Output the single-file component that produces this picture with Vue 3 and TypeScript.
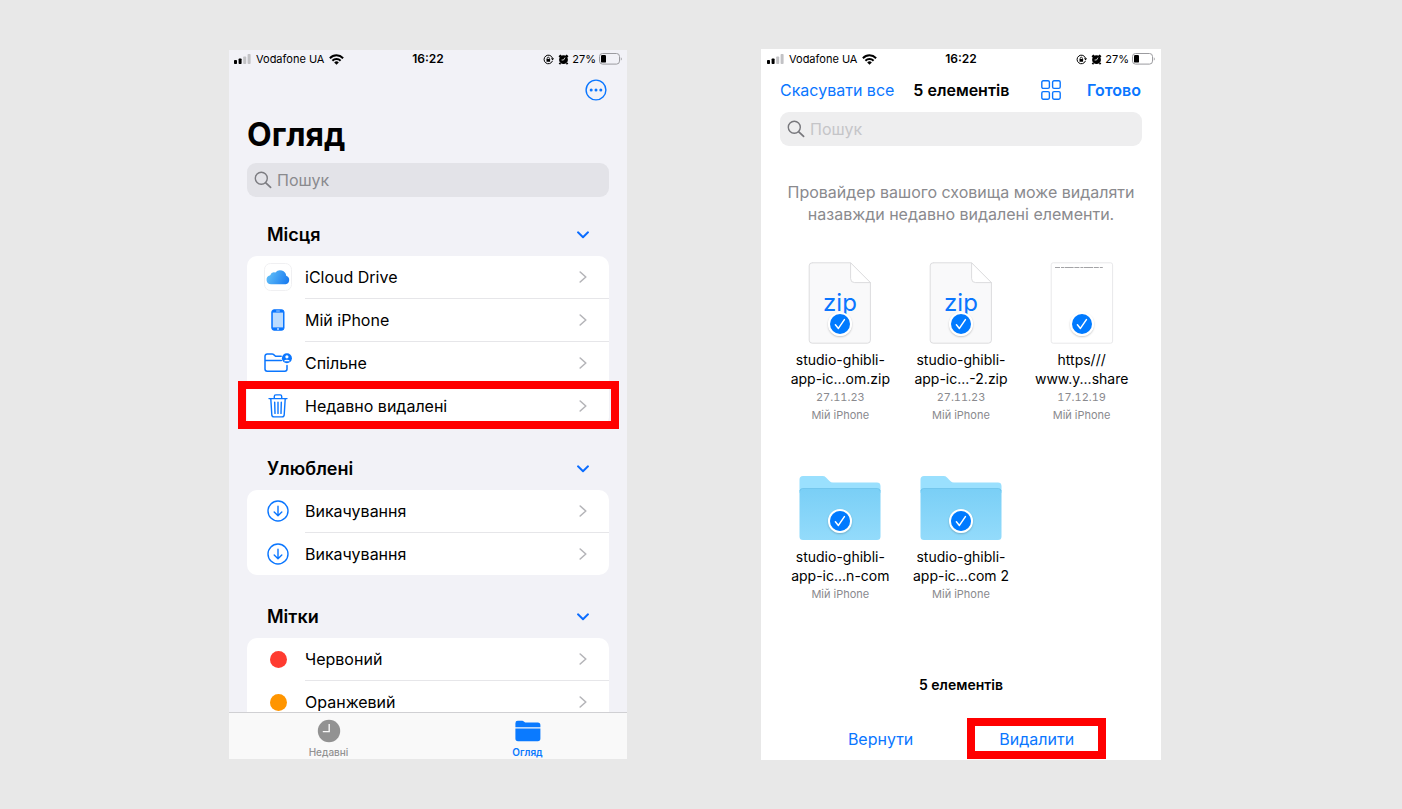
<script setup lang="ts">
import { ref } from 'vue'

type PhoneId = 'browse' | 'deleted'
interface Row {
  icon: string
  label: string
  highlighted?: boolean
}
interface Section {
  title: string
  rows: Row[]
}
interface FileItem {
  kind: 'zip' | 'page' | 'folder'
  lines: [string, string]
  date?: string
  place: string
  selected: boolean
}

const phones: PhoneId[] = ['browse', 'deleted']

const sections: Section[] = [
  {
    title: 'Місця',
    rows: [
      { icon: 'cloud', label: 'iCloud Drive' },
      { icon: 'phone', label: 'Мій iPhone' },
      { icon: 'shared', label: 'Спільне' },
      { icon: 'trash', label: 'Недавно видалені', highlighted: true },
    ],
  },
  {
    title: 'Улюблені',
    rows: [
      { icon: 'download', label: 'Викачування' },
      { icon: 'download', label: 'Викачування' },
    ],
  },
  {
    title: 'Мітки',
    rows: [
      { icon: 'red', label: 'Червоний' },
      { icon: 'orange', label: 'Оранжевий' },
    ],
  },
]

const files = ref<FileItem[]>([
  { kind: 'zip', lines: ['studio-ghibli-', 'app-ic...om.zip'], date: '27.11.23', place: 'Мій iPhone', selected: true },
  { kind: 'zip', lines: ['studio-ghibli-', 'app-ic...-2.zip'], date: '27.11.23', place: 'Мій iPhone', selected: true },
  { kind: 'page', lines: ['https///', 'www.y...share'], date: '17.12.19', place: 'Мій iPhone', selected: true },
  { kind: 'folder', lines: ['studio-ghibli-', 'app-ic...n-com'], place: 'Мій iPhone', selected: true },
  { kind: 'folder', lines: ['studio-ghibli-', 'app-ic...com 2'], place: 'Мій iPhone', selected: true },
])
</script>

<template>
  <main class="page">
    <section v-for="phone in phones" :key="phone" class="phone" :class="phone">
      <div class="status">
        <div class="status-left">
          <svg width="17" height="10" viewBox="0 0 17 10" aria-hidden="true">
            <rect x="0" y="6" width="3" height="4" rx="0.8" />
            <rect x="4.6" y="4.4" width="3" height="5.6" rx="0.8" />
            <rect x="9.2" y="2.4" width="3" height="7.6" rx="0.8" fill="#c2c2c5" />
            <rect x="13.6" y="0" width="3" height="10" rx="0.8" fill="#c2c2c5" />
          </svg>
          <span>Vodafone UA</span>
          <svg width="15" height="11" viewBox="0 0 15 11" fill="none" stroke="#000" stroke-width="2" aria-hidden="true">
            <path d="M0.9 4.2C4.6 0.4 10.4 0.4 14.1 4.2" />
            <path d="M3.4 6.7C5.7 4.4 9.3 4.4 11.6 6.7" />
            <path d="M5.2 8.4a3.2 3.2 0 0 1 4.6 0L7.5 10.8z" fill="#000" stroke="none" />
          </svg>
        </div>
        <strong class="clock">16:22</strong>
        <div class="status-right">
          <svg class="lock" width="11" height="11" viewBox="0 0 11 11" fill="none" stroke="#000" aria-hidden="true">
            <path d="M9.4 7A4.3 4.3 0 1 1 9.5 4.2" stroke-width="1" />
            <path d="M8 4.3h3L9.6 6.4z" fill="#000" stroke="none" />
            <rect x="3.5" y="5" width="3.6" height="2.8" rx="0.4" fill="#000" stroke="none" />
            <path d="M4.2 5V4.3a1.1 1.1 0 0 1 2.2 0V5" stroke-width="0.8" />
          </svg>
          <svg width="11" height="11" viewBox="0 0 11 11" aria-hidden="true">
            <circle cx="5.5" cy="5.7" r="4.4" />
            <path d="M1.2 3L3 1.2M9.8 3L8 1.2M2.4 9L1.4 10.2M8.6 9L9.6 10.2" stroke="#000" stroke-width="1.9" />
            <path d="M7 3.6L5.5 6H3.6" fill="none" stroke="#fff" stroke-width="0.8" />
          </svg>
          <span>27%</span>
          <svg width="23" height="12" viewBox="0 0 23 12" fill="none" aria-hidden="true">
            <rect x="0.5" y="0.5" width="20" height="10.6" rx="3" stroke="#9b9b9f" />
            <rect x="2" y="2" width="5" height="7.6" rx="1.2" fill="#000" />
            <path d="M21.8 4.2a2 2 0 0 1 0 3.4z" fill="#9b9b9f" />
          </svg>
        </div>
      </div>

      <template v-if="phone === 'browse'">
        <div class="scroll">
          <div class="toolbar">
            <button type="button" class="plain" aria-label="Ще">
              <svg width="22" height="22" viewBox="0 0 22 22" fill="none" aria-hidden="true">
                <circle cx="11" cy="11" r="9.9" stroke="#0a76ff" stroke-width="1.4" />
                <g fill="#0a76ff">
                  <circle cx="6.2" cy="11" r="1.5" />
                  <circle cx="11" cy="11" r="1.5" />
                  <circle cx="15.8" cy="11" r="1.5" />
                </g>
              </svg>
            </button>
          </div>
          <h1>Огляд</h1>
          <label class="search">
            <svg width="18" height="18" viewBox="0 0 18 18" fill="none" stroke="#7c7c81" stroke-width="1.4" stroke-linecap="round" aria-hidden="true">
              <circle cx="7.3" cy="7.3" r="6" />
              <path d="M11.8 11.8L16.6 16.4" stroke-width="1.7" />
            </svg>
            <input type="search" placeholder="Пошук" aria-label="Пошук" />
          </label>

          <div v-for="section in sections" :key="section.title" class="group">
            <div class="group-head">
              <h2>{{ section.title }}</h2>
              <button type="button" class="plain" :aria-label="section.title">
                <svg width="12" height="8" viewBox="0 0 12 8" fill="none" stroke="#0a6cff" stroke-width="1.9" stroke-linecap="round" stroke-linejoin="round" aria-hidden="true">
                  <path d="M1 1.3L6 6.2L11 1.3" />
                </svg>
              </button>
            </div>
            <ul class="card">
              <li v-for="(row, i) in section.rows" :key="i">
                <button type="button" class="row">
                  <span class="row-icon">
                    <svg v-if="row.icon === 'cloud'" width="28" height="28" viewBox="0 0 28 28" aria-hidden="true">
                      <defs>
                        <linearGradient id="cloud-fill" x1="0" y1="0.3" x2="1" y2="0.6">
                          <stop offset="0" stop-color="#62c0f8" />
                          <stop offset="1" stop-color="#1c7df0" />
                        </linearGradient>
                      </defs>
                      <rect x="0.5" y="0.5" width="27" height="27" rx="6" fill="#fff" stroke="#f0f0f2" />
                      <path d="M7.2 21.3a4.6 4.6 0 0 1-1-9.1 4.2 4.2 0 0 1 5.2-2.6 6.1 6.1 0 0 1 10.8 3.2 4.4 4.4 0 0 1-.6 8.5z" fill="url(#cloud-fill)" />
                    </svg>
                    <svg v-else-if="row.icon === 'phone'" width="14" height="22" viewBox="0 0 14 22" aria-hidden="true">
                      <rect x="0.8" y="0.8" width="12.2" height="20.4" rx="2.2" fill="#0a76ff" stroke="#0a76ff" />
                      <rect x="1.8" y="3.6" width="10.2" height="14.8" fill="#bcdcff" />
                      <path d="M5.2 2h3.6" stroke="#bcdcff" stroke-width="0.9" />
                      <circle cx="7" cy="19.9" r="1" fill="#bcdcff" />
                    </svg>
                    <svg v-else-if="row.icon === 'shared'" width="28" height="20" viewBox="0 0 28 20" fill="none" stroke="#0a76ff" stroke-width="1.5" stroke-linecap="round" aria-hidden="true">
                      <path d="M17.2 3.3H11.6L9.4 1.4A2 2 0 0 0 8.2 1H3.2A2.2 2.2 0 0 0 1 3.2V16a2.2 2.2 0 0 0 2.2 2.2H20.8A2.2 2.2 0 0 0 23 16V12.4M1 7.4H17.4" />
                      <circle cx="22.9" cy="5.2" r="5" fill="#0a76ff" stroke="none" />
                      <circle cx="22.9" cy="3.8" r="1.6" fill="#fff" stroke="none" />
                      <path d="M19.8 8.2a3.3 2.2 0 0 1 6.2 0z" fill="#fff" stroke="none" />
                    </svg>
                    <svg v-else-if="row.icon === 'trash'" width="20" height="24" viewBox="0 0 20 24" fill="none" stroke="#0a76ff" stroke-width="1.4" stroke-linecap="round" stroke-linejoin="round" aria-hidden="true">
                      <path d="M1 4.6H19M6.3 4.4V2.4A1.5 1.5 0 0 1 7.8 0.9H12.2A1.5 1.5 0 0 1 13.7 2.4V4.4" />
                      <path d="M2.8 4.8L3.8 20.8A2.1 2.1 0 0 0 5.9 22.9H14.1A2.1 2.1 0 0 0 16.2 20.8L17.2 4.8M6.7 8.2L7 19.4M10 8.2V19.4M13.3 8.2L13 19.4" />
                    </svg>
                    <svg v-else-if="row.icon === 'download'" width="22" height="22" viewBox="0 0 22 22" fill="none" stroke="#0a76ff" stroke-width="1.4" stroke-linecap="round" stroke-linejoin="round" aria-hidden="true">
                      <circle cx="11" cy="11" r="10" />
                      <path d="M11 6.2V15.6M7.2 12L11 15.7L14.8 12" />
                    </svg>
                    <i v-else class="dot" :class="row.icon"></i>
                  </span>
                  <span class="row-body">
                    <span>{{ row.label }}</span>
                    <svg width="8" height="12" viewBox="0 0 8 12" fill="none" stroke="#b5b5b9" stroke-width="1.6" stroke-linecap="round" stroke-linejoin="round" aria-hidden="true">
                      <path d="M1.2 1L6.8 6L1.2 11" />
                    </svg>
                  </span>
                </button>
                <span v-if="row.highlighted" class="marker"></span>
              </li>
            </ul>
          </div>
        </div>

        <nav class="tabs">
          <button type="button" class="tab">
            <svg width="24" height="24" viewBox="0 0 24 24" aria-hidden="true">
              <circle cx="12" cy="12" r="11.2" fill="#929292" />
              <path d="M12.2 5V12.6H5.8" fill="none" stroke="#f9f9f9" stroke-width="1.4" />
            </svg>
            <span>Недавні</span>
          </button>
          <button type="button" class="tab active">
            <svg width="26" height="24" viewBox="0 0 26 24" fill="#0a7aff" aria-hidden="true">
              <path d="M0.4 8.2V4.2A2.4 2.4 0 0 1 2.8 1.8H7.2A2.4 2.4 0 0 1 8.8 2.4L10.2 3.6H22.8A2.6 2.6 0 0 1 25.4 6.2V8.2z" />
              <path d="M0.4 9.6H25.4V19.6A2.6 2.6 0 0 1 22.8 22.2H3A2.6 2.6 0 0 1 0.4 19.6z" />
            </svg>
            <span>Огляд</span>
          </button>
        </nav>
      </template>

      <template v-else>
        <header class="nav">
          <button type="button" class="plain link">Скасувати все</button>
          <strong>5 елементів</strong>
          <button type="button" class="plain grid-button" aria-label="Вигляд">
            <svg width="20" height="20" viewBox="0 0 20 20" fill="none" stroke="#0a76ff" stroke-width="1.4" aria-hidden="true">
              <rect x="0.8" y="0.8" width="7.6" height="7.6" rx="1.4" />
              <rect x="11.6" y="0.8" width="7.6" height="7.6" rx="1.4" />
              <rect x="0.8" y="11.6" width="7.6" height="7.6" rx="1.4" />
              <rect x="11.6" y="11.6" width="7.6" height="7.6" rx="1.4" />
            </svg>
          </button>
          <button type="button" class="plain link done">Готово</button>
        </header>
        <label class="search">
          <svg width="18" height="18" viewBox="0 0 18 18" fill="none" stroke="#77777c" stroke-width="1.4" stroke-linecap="round" aria-hidden="true">
            <circle cx="7.3" cy="7.3" r="6" />
            <path d="M11.8 11.8L16.6 16.4" stroke-width="1.7" />
          </svg>
          <input type="search" placeholder="Пошук" aria-label="Пошук" />
        </label>
        <p class="notice">Провайдер вашого сховища може видаляти<br />назавжди недавно видалені елементи.</p>

        <ul class="files">
          <li v-for="(file, i) in files" :key="i">
            <label class="file">
              <span class="preview">
                <svg v-if="file.kind === 'zip'" width="64" height="82" viewBox="0 0 64 82" aria-hidden="true">
                  <path d="M4 0.8H42.6L62.4 20.6V78.2A3 3 0 0 1 59.4 81.2H4.2A3 3 0 0 1 1.2 78.2V3.8A3 3 0 0 1 4.2 0.8z" fill="#f9f9fa" stroke="#dcdcde" />
                  <path d="M42.6 0.8V16.6A4 4 0 0 0 46.6 20.6H62.4z" fill="#fff" stroke="#dcdcde" stroke-linejoin="round" />
                  <text x="32" y="49" text-anchor="middle" class="zip-text">zip</text>
                </svg>
                <svg v-else-if="file.kind === 'page'" width="64" height="82" viewBox="0 0 64 82" aria-hidden="true">
                  <rect x="1.2" y="0.8" width="61.4" height="80.4" rx="2" fill="#fff" stroke="#e8e8ea" />
                  <path d="M5 5.5H53" stroke="#a3a3a6" stroke-width="1" stroke-dasharray="5 1 3 0.6 9 0.8" />
                </svg>
                <svg v-else width="82" height="66" viewBox="0 0 82 66" aria-hidden="true">
                  <defs>
                    <linearGradient :id="`folder-fill-${i}`" x1="0" y1="0" x2="0" y2="1">
                      <stop offset="0" stop-color="#7acff6" />
                      <stop offset="1" stop-color="#93dbfb" />
                    </linearGradient>
                  </defs>
                  <path d="M0.5 16V4.5A3.5 3.5 0 0 1 4 1H23.5A5 5 0 0 1 27 2.4L30.4 6A5 5 0 0 0 34 7.6H78A3.5 3.5 0 0 1 81.5 11V18H0.5z" fill="#9ae0fe" />
                  <path d="M0.5 16.5A3 3 0 0 1 3.5 13.5H78.5A3 3 0 0 1 81.5 16.5V61.5A3.5 3.5 0 0 1 78 65H4A3.5 3.5 0 0 1 0.5 61.5z" :fill="`url(#folder-fill-${i})`" />
                  <path d="M0.9 16.2A2.8 2.8 0 0 1 3.6 13.5H78.4A2.8 2.8 0 0 1 81.1 16.2" fill="none" stroke="#6cc2ea" stroke-width="0.8" />
                </svg>
                <span class="badge">
                  <input v-model="file.selected" type="checkbox" />
                  <svg width="12" height="12" viewBox="0 0 12 12" fill="none" stroke="#fff" stroke-width="1.5" stroke-linecap="round" stroke-linejoin="round" aria-hidden="true">
                    <path d="M1.4 6.8L4.4 10.4L10.4 1.6" />
                  </svg>
                </span>
              </span>
              <span class="name">{{ file.lines[0] }}<br />{{ file.lines[1] }}</span>
              <span v-if="file.date" class="meta">{{ file.date }}</span>
              <span class="meta">{{ file.place }}</span>
            </label>
          </li>
        </ul>

        <strong class="count">5 елементів</strong>
        <footer class="actions">
          <button type="button" class="plain link">Вернути</button>
          <button type="button" class="plain link delete">Видалити<span class="marker"></span></button>
        </footer>
      </template>
    </section>
  </main>
</template>

<style>
body {
  margin: 0;
  background: #e8e8e8;
}
</style>

<style scoped>
.page {
  box-sizing: border-box;
  min-height: 100vh;
  padding: 49px 0;
  display: grid;
  grid-template-columns: minmax(0, 229fr) minmax(360px, 398fr) minmax(0, 134fr) minmax(360px, 400fr) minmax(0, 241fr);
  background: #e8e8e8;
  font-family: Inter, "Noto Sans", sans-serif;
  color: #000;
}
.phone {
  display: flex;
  flex-direction: column;
  min-width: 0;
}
.browse {
  grid-column: 2;
  margin: 1px 0;
  background: #f2f2f7;
}
.deleted {
  grid-column: 4;
  background: #fff;
}
ul {
  list-style: none;
  margin: 0;
  padding: 0;
}
h1,
h2,
p {
  margin: 0;
}
button {
  font: inherit;
  color: inherit;
  border: 0;
  margin: 0;
  padding: 0;
  background: none;
  cursor: pointer;
}
svg {
  display: block;
  flex: none;
}
.status {
  display: grid;
  grid-template-columns: 1fr auto 1fr;
  align-items: center;
  height: 18px;
  padding: 0 5px;
  font-size: 12px;
  line-height: 18px;
}
.deleted .status {
  padding: 1px 6px;
}
.status-left,
.status-right {
  display: flex;
  align-items: center;
  gap: 4px;
  font-size: 11px;
}
.status-left {
  gap: 5px;
}
.status-right {
  justify-content: flex-end;
  gap: 3px;
}
.lock {
  margin-right: 1px;
}
.clock {
  font-weight: 600;
}
.scroll {
  flex: 1 1 0;
  min-height: 0;
  overflow: hidden;
  padding: 11px 18px 0;
}
.toolbar {
  display: flex;
  justify-content: flex-end;
  padding-right: 2px;
}
h1 {
  margin: 14px 0 8px;
  font-size: 32px;
  line-height: 40px;
  font-weight: 700;
}
.search {
  display: flex;
  align-items: center;
  gap: 5px;
  height: 34px;
  padding: 0 7px;
  border-radius: 9px;
  background: #e3e3e8;
}
.deleted .search {
  margin: 4px 19px 0;
  background: #eeeeef;
}
.search input {
  flex: 1;
  min-width: 0;
  padding: 0;
  border: 0;
  outline: 0;
  background: none;
  font: inherit;
  font-size: 16px;
}
.search input::placeholder {
  color: #8a8a8e;
  opacity: 1;
}
.deleted .search input::placeholder {
  color: #c5c5c8;
}
.group {
  padding-top: 30px;
}
.search + .group {
  padding-top: 26px;
}
.group-head {
  display: flex;
  align-items: center;
  justify-content: space-between;
  padding: 0 20px 9px;
}
h2 {
  font-size: 18px;
  line-height: 24px;
  font-weight: 600;
}
.card {
  border-radius: 10px;
  background: #fff;
}
.card li {
  position: relative;
}
.row {
  display: flex;
  width: 100%;
  padding-left: 17px;
  text-align: left;
  font-size: 16px;
  line-height: 20px;
}
.row-icon {
  display: flex;
  align-items: center;
  justify-content: center;
  width: 28px;
  height: 42px;
  margin-right: 13px;
}
.row-body {
  flex: 1;
  display: flex;
  align-items: center;
  justify-content: space-between;
  height: 42px;
  padding-right: 22px;
  border-bottom: 1px solid #e6e6e9;
}
.card li:last-child .row-body {
  border-bottom: 0;
}
.dot {
  width: 17px;
  height: 17px;
  border-radius: 50%;
}
.dot.red {
  background: #ff3b30;
}
.dot.orange {
  background: #ff9500;
}
.marker {
  position: absolute;
  inset: -4px -10px -2px -9px;
  border: 8px solid #f00;
  pointer-events: none;
}
.tabs {
  display: grid;
  grid-template-columns: 1fr 1fr;
  border-top: 1px solid #d0d0d3;
  background: #f9f9f9;
}
.tab {
  display: flex;
  flex-direction: column;
  align-items: center;
  gap: 3px;
  padding: 6px 0 0;
  font-size: 10px;
  line-height: 13px;
  font-weight: 500;
  color: #929292;
}
.tab.active {
  color: #0a7aff;
  font-weight: 600;
}
.nav {
  display: flex;
  align-items: center;
  height: 39px;
  padding: 1px 20px 0 19px;
  font-size: 16px;
  line-height: 20px;
}
.nav strong {
  margin-left: 19px;
  font-weight: 600;
}
.link {
  color: #0a76ff;
}
.grid-button {
  margin: 0 26px 0 auto;
}
.done {
  font-weight: 600;
}
.deleted .search {
  margin-top: 3px;
}
.notice {
  margin-top: 35px;
  font-size: 16px;
  line-height: 22px;
  color: #8a8a8e;
  text-align: center;
}
.files {
  display: grid;
  grid-template-columns: repeat(3, 1fr);
  row-gap: 35px;
  padding: 37px 19px 0;
}
.file {
  display: flex;
  flex-direction: column;
  align-items: center;
  text-align: center;
}
.preview {
  position: relative;
  display: flex;
  align-items: flex-end;
  justify-content: center;
  height: 82px;
  margin-bottom: 6px;
}
.zip-text {
  font-size: 24px;
  font-weight: 400;
  fill: #0a76ff;
}
.badge {
  position: absolute;
  left: 50%;
  bottom: 8px;
  width: 20px;
  height: 20px;
  margin-left: -12px;
  border: 2px solid #fff;
  border-radius: 50%;
  box-shadow: 0 1px 2px rgba(0, 0, 0, 0.22);
  display: grid;
  place-items: center;
}
.badge > * {
  grid-area: 1 / 1;
}
.badge input {
  appearance: none;
  width: 20px;
  height: 20px;
  margin: 0;
  border-radius: 50%;
  background: #fff;
}
.badge input:checked {
  background: #007aff;
}
.badge svg {
  z-index: 1;
  pointer-events: none;
}
.name {
  font-size: 14px;
  line-height: 19px;
}
.meta {
  font-size: 11px;
  line-height: 18px;
  color: #8a8a8e;
  font-variant-numeric: tabular-nums;
}
.count {
  margin-top: auto;
  font-size: 14px;
  line-height: 20px;
  font-weight: 600;
  text-align: center;
}
.actions {
  display: flex;
  justify-content: center;
  gap: 86px;
  padding: 34px 0 11px;
  font-size: 16px;
  line-height: 20px;
}
.delete {
  position: relative;
}
.delete .marker {
  inset: -11px -32px -10px;
}
</style>
